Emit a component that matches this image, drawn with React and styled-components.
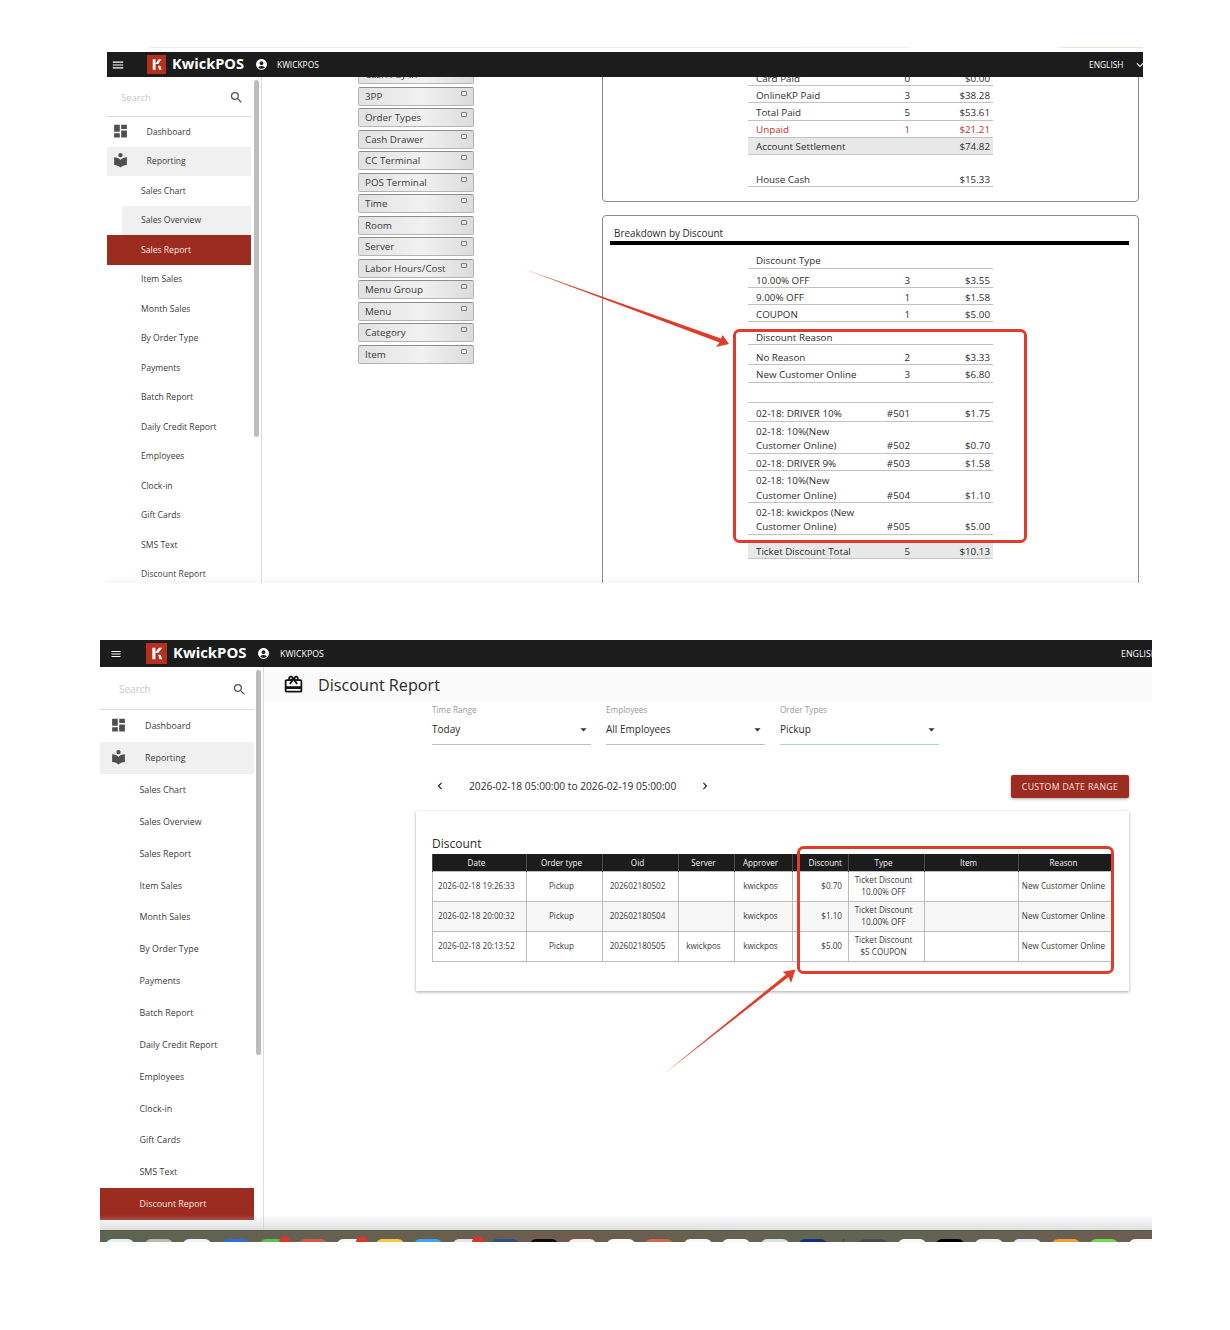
import React from "react";
import styled, { createGlobalStyle } from "styled-components";
import {
  MdMenu,
  MdDashboard,
  MdLocalLibrary,
  MdSearch,
  MdAccountCircle,
  MdArrowDropDown,
  MdChevronLeft,
  MdChevronRight,
  MdKeyboardArrowDown,
  MdOutlineCardGiftcard,
} from "react-icons/md";

const RED = "#9c2b20";
const MARK = "#e03c2b";

const GlobalStyle = createGlobalStyle`
  html, body { margin: 0; background: #fff; }
  body { font-family: "Open Sans", "Liberation Sans", sans-serif; color: #333; }
  * { box-sizing: border-box; }
`;

const Page = styled.div`
  min-height: 1330px;
  padding-top: 47px;
`;
const TopEdge = styled.div`
  margin: 0 87px 4px 150px;
  height: 1px;
  background: linear-gradient(to right, #f6e9e0 0, #f6ece4 76%, #fff 77%, #fff 91%, #f6e0d6 92%);
`;
const Shot = styled.section`
  position: relative;
  overflow: hidden;
  margin-left: ${(p) => p.$m.left}px;
  margin-bottom: 57px;
  width: ${(p) => p.$m.width}px;
  height: ${(p) => p.$m.height}px;
  display: flex;
  flex-direction: column;
`;
const Overlay = styled.svg`
  position: absolute;
  inset: 0;
  width: 100%;
  height: 100%;
  pointer-events: none;
  z-index: 5;
`;

/* navbar */
const NavBar = styled.header`
  flex: none;
  height: ${(p) => p.$m.navH}px;
  background: #1c1c1c;
  color: #fff;
  display: flex;
  align-items: center;
  white-space: nowrap;
  overflow: hidden;
`;
const MenuBox = styled.div`
  width: ${(p) => p.$m.logoLeft}px;
  padding-left: ${(p) => p.$m.menuPad}px;
  display: flex;
  font-size: ${(p) => p.$m.menuSize}px;
`;
const LogoMark = styled.svg`
  flex: none;
  width: ${(p) => p.$m.logoSize}px;
  height: ${(p) => p.$m.logoSize}px;
`;
const Brand = styled.span`
  margin: ${(p) => p.$m.brandLift}px 0 0 6px;
  width: ${(p) => p.$m.brandW}px;
  font-family: "Open Sans", sans-serif;
  font-weight: 700;
  font-size: ${(p) => p.$m.brandSize}px;
`;
const UserIcon = styled(MdAccountCircle)`
  flex: none;
  margin-left: ${(p) => p.$m.userGap}px;
  font-size: ${(p) => p.$m.userSize}px;
`;
const UserName = styled.span`
  margin-left: ${(p) => p.$m.nameGap}px;
  font-size: ${(p) => p.$m.navFont}px;
`;
const Language = styled.span`
  margin-left: auto;
  flex: none;
  width: ${(p) => p.$m.langW}px;
  font-size: ${(p) => p.$m.navFont}px;
  display: flex;
  align-items: center;
  gap: 9px;
`;
const ArrowDown = styled(MdKeyboardArrowDown)`
  flex: none;
  font-size: 14px;
`;

/* sidebar */
const Body = styled.div`
  flex: 1;
  min-height: 0;
  display: flex;
  position: relative;
  overflow: hidden;
  &::after {
    content: "";
    position: absolute;
    left: 0;
    right: 0;
    bottom: 0;
    height: ${(p) => p.$fade}px;
    background: linear-gradient(to bottom, rgba(215, 215, 215, 0), rgba(205, 205, 205, ${(p) => p.$fadeAlpha}));
    pointer-events: none;
  }
`;
const Side = styled.nav`
  flex: none;
  width: ${(p) => p.$m.sideW}px;
  overflow: hidden;
`;
const SearchRow = styled.div`
  height: ${(p) => p.$m.searchH}px;
  border-bottom: 1px solid #dcdcdc;
  display: flex;
  align-items: center;
  justify-content: space-between;
  padding: ${(p) => p.$m.searchPad};
  color: #555;
  font-size: ${(p) => p.$m.searchIcon}px;
`;
const SearchHint = styled.span`
  color: #c9c9c9;
  font-size: ${(p) => p.$m.searchFont}px;
`;
const SideRow = styled.div`
  height: ${(p) => p.$m.rowH}px;
  display: flex;
  align-items: center;
  font-size: ${(p) => p.$m.sideFont}px;
  color: ${(p) => (p.$active ? "#f8e9e6" : "#3c3c3c")};
  background: ${(p) => (p.$active ? RED : p.$hover ? "#f0f0f0" : "transparent")};
  margin-left: ${(p) => (p.$inset ? p.$m.insetLeft : 0)}px;
  padding-left: ${(p) => (p.$inset ? p.$m.subLeft - p.$m.insetLeft : p.$sub ? p.$m.subLeft : p.$m.mainLeft)}px;
  position: relative;
  white-space: nowrap;
`;
const SideIcon = styled.span`
  position: absolute;
  left: ${(p) => p.$m.iconLeft}px;
  top: 50%;
  transform: translateY(-55%);
  display: flex;
  color: #4f4f4f;
  font-size: ${(p) => p.$m.iconSize}px;
`;
const Gutter = styled.div`
  flex: none;
  width: ${(p) => p.$m.gutterW}px;
  border-right: 1px solid #dedede;
  padding: 3px 0 0 ${(p) => p.$m.thumbPad}px;
`;
const Thumb = styled.div`
  width: 5px;
  height: ${(p) => p.$m.thumbH}px;
  border-radius: 3px;
  background: #bdbdbd;
`;

/* top shot: report content */
const ReportArea = styled.main`
  flex: 1;
  min-width: 0;
  overflow: hidden;
  display: flex;
  align-items: flex-start;
  padding: 0 4px 0 96px;
`;
const ButtonColumn = styled.div`
  flex: none;
  width: 116px;
  margin-top: -12px;
  display: flex;
  flex-direction: column;
  gap: 2.5px;
`;
const GroupButton = styled.div`
  height: 19px;
  padding: 0 6px;
  display: flex;
  align-items: center;
  justify-content: space-between;
  font-size: 9.8px;
  color: #3a3a3a;
  border: 1px solid #b4b4b4;
  border-top-color: #8d8d8d;
  border-radius: 2px;
  background: linear-gradient(to right, #e2e2e2, #f1f1f1 55%, #dcdcdc);
`;
const Tick = styled.i`
  flex: none;
  width: 6px;
  height: 5px;
  margin-bottom: 6px;
  border: 1px solid #7f7f7f;
  border-radius: 1px;
  background: #f1f1f1;
`;
const ReportColumn = styled.div`
  flex: none;
  width: 537px;
  margin-left: 128px;
  margin-top: -17px;
  display: flex;
  flex-direction: column;
  gap: 13px;
`;
const Panel = styled.div`
  border: 1px solid #8c8c8c;
  border-radius: 4px;
  padding: ${(p) => p.$pad};
  min-height: ${(p) => p.$minH || 0}px;
`;
const PanelTitle = styled.div`
  font-size: 9.9px;
  line-height: 14px;
  color: #2b2b2b;
  padding: 10px 0 1px 4px;
  border-bottom: 4px solid #000;
  margin: 0 2px 6px 0;
`;
const Ledger = styled.div`
  width: 245px;
  margin: 0 auto;
`;
const LedgerRow = styled.div`
  display: grid;
  grid-template-columns: 114px 40px 1fr;
  align-items: end;
  margin-top: ${(p) => p.$gap || 0}px;
  min-height: 17.2px;
  padding: 2.7px 3px 0 8px;
  font-size: 9.8px;
  line-height: 14.5px;
  color: ${(p) => (p.$alert ? "#c9302a" : "#2e2e2e")};
  background: ${(p) => (p.$total ? "#e8e8e8" : "transparent")};
  border-bottom: ${(p) => (p.$total ? "1.5px solid #c4c4c4" : "1px solid #c2c2c2")};
`;
const LedgerCell = styled.span`
  margin-bottom: -1px;
  text-align: ${(p) => (p.$num ? "right" : "left")};
`;

/* bottom shot: discount report */
const ReportMain = styled.main`
  flex: 1;
  min-width: 0;
  display: flex;
  flex-direction: column;
`;
const TitleBand = styled.div`
  height: 35px;
  flex: none;
  background: #fafafa;
  display: flex;
  align-items: center;
  padding-left: 19px;
  gap: 14px;
  font-size: 16.2px;
  color: #2c2c2c;
`;
const TitleIcon = styled(MdOutlineCardGiftcard)`
  font-size: 21px;
  color: #111;
`;
const ReportBody = styled.div`
  padding: 0 23px 0 152px;
`;
const Filters = styled.div`
  display: flex;
  gap: 15px;
  padding-left: 16px;
`;
const Filter = styled.div`
  width: 159px;
  height: 43px;
  border-bottom: 1px solid ${(p) => (p.$focus ? "#a5d6cb" : "#bdbdbd")};
`;
const FilterLabel = styled.div`
  font-size: 8.2px;
  line-height: 15px;
  color: #9a9a9a;
`;
const FilterValue = styled.div`
  display: flex;
  align-items: center;
  justify-content: space-between;
  margin-top: 4px;
  line-height: 16px;
  font-size: 10px;
  color: #2c2c2c;
  svg {
    font-size: 15px;
    color: #333;
  }
`;
const DateRow = styled.div`
  display: flex;
  align-items: center;
  justify-content: space-between;
  margin-top: 30px;
`;
const DateNav = styled.div`
  display: flex;
  align-items: center;
  margin-left: 17px;
  padding-bottom: 1px;
  gap: 22px;
  font-size: 10.2px;
  color: #2c2c2c;
  svg {
    font-size: 14px;
    color: #222;
  }
`;
const RangeButton = styled.button`
  width: 118px;
  height: 23px;
  padding: 0;
  border: 0;
  border-radius: 2px;
  background: ${RED};
  color: #f7e7e4;
  font: 8.7px "Open Sans", sans-serif;
  letter-spacing: 0.35px;
  box-shadow: 0 1px 3px rgba(0, 0, 0, 0.35);
`;
const Card = styled.div`
  margin-top: 13px;
  padding: 22.5px 17px 29px 16px;
  background: #fff;
  box-shadow: 0 1px 3px rgba(0, 0, 0, 0.35);
`;
const CardTitle = styled.div`
  font-size: 12px;
  line-height: 19px;
  margin-bottom: 1.5px;
  color: #2b2b2b;
`;
const Sheet = styled.table`
  width: 680px;
  table-layout: fixed;
  border-collapse: collapse;
  font-size: 8.15px;
  color: #3a3a3a;
`;
const HeadCell = styled.th`
  height: 17px;
  padding: 0 ${(p) => (p.$tight ? 4 : 6)}px 0 0;
  text-align: ${(p) => p.$align || "center"};
  font-weight: 400;
  background: #1c1c1c;
  color: #f2f2f2;
  border: 1px solid #4b4b4b;
  border-width: 0 1px;
`;
const SheetRow = styled.tr`
  background: ${(p) => (p.$alt ? "#f7f7f7" : "#fff")};
`;
const Cell = styled.td`
  height: 30px;
  padding: ${(p) => (p.$align === "left" ? "0 0 0 5px" : p.$tight ? "0 4px 0 0" : "0 6px 0 0")};
  text-align: ${(p) => p.$align || "center"};
  line-height: 12.5px;
  border: 1px solid #bdbdbd;
`;

/* dock */
const Dock = styled.footer`
  flex: none;
  height: 12px;
  overflow: hidden;
  display: flex;
  align-items: flex-start;
  gap: 10.5px;
  padding: 8px 0 0 6px;
  background: linear-gradient(to right, #5d6450, #6e5c4e 45%, #5f6551 70%, #6d5d50);
  border-top: 1px solid #55574c;
`;
const DockApp = styled.span`
  position: relative;
  flex: none;
  width: 28px;
  height: 12px;
  border-radius: 6px 6px 0 0;
  background: ${(p) => p.$c};
`;
const DockBadge = styled.i`
  position: absolute;
  right: -3px;
  top: -3px;
  width: 12px;
  height: 12px;
  border-radius: 50%;
  background: #d4382b;
`;
const DockDivider = styled.span`
  flex: none;
  width: 1px;
  height: 4px;
  margin: 0 5px;
  background: #3f3f3a;
`;

const topM = {
  left: 107, width: 1036, height: 531, navH: 25, logoLeft: 40, menuPad: 4, menuSize: 14,
  logoSize: 19, brandW: 72, brandSize: 14.6, brandLift: -3, userGap: 11, userSize: 13, nameGap: 9, navFont: 8.4, langW: 54,
  sideW: 144, searchH: 40, searchPad: "2px 7px 0 14px", searchIcon: 15, searchFont: 9.5, rowH: 29.5, sideFont: 8.6,
  mainLeft: 39.5, subLeft: 34, insetLeft: 15, iconLeft: 4.5, iconSize: 17, gutterW: 11, thumbPad: 3, thumbH: 357,
};
const bottomM = {
  left: 100, width: 1052, height: 602, navH: 27, logoLeft: 46, menuPad: 10, menuSize: 12,
  logoSize: 21, brandW: 75, brandSize: 14.9, brandLift: -4, userGap: 9, userSize: 13, nameGap: 10, navFont: 8.8, langW: 31,
  sideW: 154, searchH: 43, searchPad: "2px 7px 0 19px", searchIcon: 15, searchFont: 10, rowH: 31.85, sideFont: 8.9,
  mainLeft: 45, subLeft: 39.5, insetLeft: 0, iconLeft: 10, iconSize: 17, gutterW: 10, thumbPad: 2, thumbH: 385,
};

const SUB_ITEMS = [
  "Sales Chart", "Sales Overview", "Sales Report", "Item Sales", "Month Sales", "By Order Type", "Payments",
  "Batch Report", "Daily Credit Report", "Employees", "Clock-in", "Gift Cards", "SMS Text", "Discount Report",
];

const GROUPS = [
  "Cash Pay In", "3PP", "Order Types", "Cash Drawer", "CC Terminal", "POS Terminal", "Time", "Room", "Server",
  "Labor Hours/Cost", "Menu Group", "Menu", "Category", "Item",
];

const TENDERS = [
  { label: "Card Paid", count: "0", value: "$0.00" },
  { label: "OnlineKP Paid", count: "3", value: "$38.28" },
  { label: "Total Paid", count: "5", value: "$53.61" },
  { label: "Unpaid", count: "1", value: "$21.21", alert: true },
  { label: "Account Settlement", value: "$74.82", total: true },
  { label: "House Cash", value: "$15.33", gap: 15.3 },
];

const DISCOUNTS = [
  { label: "Discount Type" },
  { label: "10.00% OFF", count: "3", value: "$3.55", gap: 2.3 },
  { label: "9.00% OFF", count: "1", value: "$1.58" },
  { label: "COUPON", count: "1", value: "$5.00" },
  { label: "Discount Reason", gap: 5.7 },
  { label: "No Reason", count: "2", value: "$3.33", gap: 2.8 },
  { label: "New Customer Online", count: "3", value: "$6.80" },
  { label: "", gap: 2.9 },
  { label: "02-18: DRIVER 10%", count: "#501", value: "$1.75", gap: 2.2 },
  { label: "02-18: 10%(New Customer Online)", count: "#502", value: "$0.70" },
  { label: "02-18: DRIVER 9%", count: "#503", value: "$1.58", gap: 0.5 },
  { label: "02-18: 10%(New Customer Online)", count: "#504", value: "$1.10" },
  { label: "02-18: kwickpos (New Customer Online)", count: "#505", value: "$5.00" },
  { label: "Ticket Discount Total", count: "5", value: "$10.13", total: true, gap: 7.5 },
];

const COLUMNS = [
  ["Date", 94], ["Order type", 76], ["Oid", 76], ["Server", 56], ["Approver", 58],
  ["Discount", 56], ["Type", 76], ["Item", 94], ["Reason", 94],
];

const TICKETS = [
  { date: "2026-02-18 19:26:33", oid: "202602180502", server: "", discount: "$0.70", type: "10.00% OFF" },
  { date: "2026-02-18 20:00:32", oid: "202602180504", server: "", discount: "$1.10", type: "10.00% OFF" },
  { date: "2026-02-18 20:13:52", oid: "202602180505", server: "kwickpos", discount: "$5.00", type: "$5 COUPON" },
];

const DOCK_APPS = [
  ["#e4eef6"], ["#b9bcb6"], ["#eef3f8"], ["#2f6fdb"], ["#58c24d", true], ["#d9574a"], ["#f7f7f7", true],
  ["#f1cb45"], ["#3fa5ee"], ["#e6e6e6", true], ["#2b4f86"], ["#0d0d0d"], ["#f5eeee"], ["#fafafa"],
  ["#d0694d"], ["#f4f8fb"], ["#f8f8f8"], ["#d5e4e4"], ["#15317c"], null, ["#4a4a52"], ["#f8f8f8"],
  ["#000"], ["#f6f1f1"], ["#e6edf8"], ["#f0a030"], ["#6fdc50"], ["#f8f8f8"],
];

function NavRow({ m }) {
  return (
    <NavBar $m={m}>
      <MenuBox $m={m}>
        <MdMenu />
      </MenuBox>
      <LogoMark $m={m} viewBox="0 0 20 20">
        <rect width="20" height="20" fill="#b5301f" />
        <path d="M6 4.5h3v4.6l3.2-4.6h3.2l-3.6 4.9H9v6H6z" fill="#fff" />
        <path d="M11.6 11.2h2.4l1.4 4.2h-2.6z" fill="#fff" />
      </LogoMark>
      <Brand $m={m}>KwickPOS</Brand>
      <UserIcon $m={m} />
      <UserName $m={m}>KWICKPOS</UserName>
      <Language $m={m}>
        ENGLISH
        <ArrowDown />
      </Language>
    </NavBar>
  );
}

function Sidebar({ m, active, inset }) {
  return (
    <>
      <Side $m={m}>
        <SearchRow $m={m}>
          <SearchHint $m={m}>Search</SearchHint>
          <MdSearch />
        </SearchRow>
        <SideRow $m={m}>
          <SideIcon $m={m}>
            <MdDashboard />
          </SideIcon>
          Dashboard
        </SideRow>
        <SideRow $m={m} $hover>
          <SideIcon $m={m}>
            <MdLocalLibrary />
          </SideIcon>
          Reporting
        </SideRow>
        {SUB_ITEMS.map((name) => (
          <SideRow key={name} $m={m} $sub $active={name === active} $hover={name === inset} $inset={name === inset}>
            {name}
          </SideRow>
        ))}
      </Side>
      <Gutter $m={m}>
        <Thumb $m={m} />
      </Gutter>
    </>
  );
}

function Ledgers({ rows }) {
  return (
    <Ledger>
      {rows.map((r, i) => (
        <LedgerRow key={i} $gap={r.gap} $alert={r.alert} $total={r.total}>
          <LedgerCell>{r.label}</LedgerCell>
          <LedgerCell $num>{r.count}</LedgerCell>
          <LedgerCell $num>{r.value}</LedgerCell>
        </LedgerRow>
      ))}
    </Ledger>
  );
}

export default function App() {
  return (
    <Page>
      <GlobalStyle />
      <TopEdge />
      <Shot $m={topM}>
        <NavRow m={topM} />
        <Body $fade={8} $fadeAlpha={0.12}>
          <Sidebar m={topM} active="Sales Report" inset="Sales Overview" />
          <ReportArea>
            <ButtonColumn>
              {GROUPS.map((g) => (
                <GroupButton key={g}>
                  {g}
                  <Tick />
                </GroupButton>
              ))}
            </ButtonColumn>
            <ReportColumn>
              <Panel $pad="8px 0 14px">
                <Ledgers rows={TENDERS} />
              </Panel>
              <Panel $pad="0 7px 0 7px" $minH={400}>
                <PanelTitle>Breakdown by Discount</PanelTitle>
                <Ledgers rows={DISCOUNTS} />
              </Panel>
            </ReportColumn>
          </ReportArea>
        </Body>
        <Overlay viewBox="107 52 1036 531">
          <rect x="734.5" y="330.5" width="291" height="211" rx="5" fill="none" stroke={MARK} strokeWidth="3" />
          <polygon points="524,269 721,338.5 722.6,335 729,344 716,347 719.5,342.5" fill={MARK} />
        </Overlay>
      </Shot>

      <Shot $m={bottomM}>
        <NavRow m={bottomM} />
        <Body $fade={15} $fadeAlpha={0.65}>
          <Sidebar m={bottomM} active="Discount Report" />
          <ReportMain>
            <TitleBand>
              <TitleIcon />
              Discount Report
            </TitleBand>
            <ReportBody>
              <Filters>
                <Filter>
                  <FilterLabel>Time Range</FilterLabel>
                  <FilterValue>
                    Today
                    <MdArrowDropDown />
                  </FilterValue>
                </Filter>
                <Filter>
                  <FilterLabel>Employees</FilterLabel>
                  <FilterValue>
                    All Employees
                    <MdArrowDropDown />
                  </FilterValue>
                </Filter>
                <Filter $focus>
                  <FilterLabel>Order Types</FilterLabel>
                  <FilterValue>
                    Pickup
                    <MdArrowDropDown />
                  </FilterValue>
                </Filter>
              </Filters>
              <DateRow>
                <DateNav>
                  <MdChevronLeft />
                  2026-02-18 05:00:00 to 2026-02-19 05:00:00
                  <MdChevronRight />
                </DateNav>
                <RangeButton>CUSTOM DATE RANGE</RangeButton>
              </DateRow>
              <Card>
                <CardTitle>Discount</CardTitle>
                <Sheet>
                  <colgroup>
                    {COLUMNS.map(([name, w]) => (
                      <col key={name} width={w} />
                    ))}
                  </colgroup>
                  <thead>
                    <tr>
                      {COLUMNS.map(([name]) => (
                        <HeadCell key={name} $tight={name === "Reason"} $align={name === "Discount" ? "right" : undefined}>
                          {name}
                        </HeadCell>
                      ))}
                    </tr>
                  </thead>
                  <tbody>
                    {TICKETS.map((t, i) => (
                      <SheetRow key={t.oid} $alt={i === 1}>
                        <Cell $align="left">{t.date}</Cell>
                        <Cell>Pickup</Cell>
                        <Cell>{t.oid}</Cell>
                        <Cell>{t.server}</Cell>
                        <Cell>kwickpos</Cell>
                        <Cell $align="right">{t.discount}</Cell>
                        <Cell>
                          Ticket Discount
                          <br />
                          {t.type}
                        </Cell>
                        <Cell />
                        <Cell $tight>New Customer Online</Cell>
                      </SheetRow>
                    ))}
                  </tbody>
                </Sheet>
              </Card>
            </ReportBody>
          </ReportMain>
        </Body>
        <Dock>
          {DOCK_APPS.map((app, i) =>
            app ? (
              <DockApp key={i} $c={app[0]}>
                {app[1] && <DockBadge />}
              </DockApp>
            ) : (
              <DockDivider key={i} />
            )
          )}
        </Dock>
        <Overlay viewBox="100 640 1052 602">
          <rect x="798.5" y="847.5" width="314" height="125" rx="5" fill="none" stroke={MARK} strokeWidth="3" />
          <polygon points="665,1073 786,974.5 782.7,971.7 795.5,969.5 791,983 788.5,977" fill={MARK} />
        </Overlay>
      </Shot>
    </Page>
  );
}
